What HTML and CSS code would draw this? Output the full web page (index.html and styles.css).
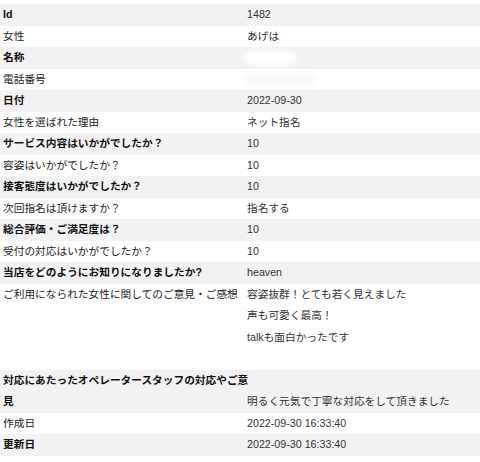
FILE: index.html
```html
<!DOCTYPE html>
<html lang="ja">
<head>
<meta charset="utf-8">
<link rel="stylesheet" href="styles.css">
</head>
<body>
<div class="list">
  <div class="row"><div class="k">Id</div><div class="v">1482</div></div>
  <div class="row"><div class="k">女性</div><div class="v">あげは</div></div>
  <div class="row"><div class="k">名称</div><div class="v"><span class="blur blur-w"></span></div></div>
  <div class="row"><div class="k">電話番号</div><div class="v"><span class="blur blur-g"></span></div></div>
  <div class="row"><div class="k">日付</div><div class="v">2022-09-30</div></div>
  <div class="row"><div class="k">女性を選ばれた理由</div><div class="v">ネット指名</div></div>
  <div class="row"><div class="k">サービス内容はいかがでしたか？</div><div class="v">10</div></div>
  <div class="row"><div class="k">容姿はいかがでしたか？</div><div class="v">10</div></div>
  <div class="row"><div class="k">接客態度はいかがでしたか？</div><div class="v">10</div></div>
  <div class="row"><div class="k">次回指名は頂けますか？</div><div class="v">指名する</div></div>
  <div class="row"><div class="k">総合評価・ご満足度は？</div><div class="v">10</div></div>
  <div class="row"><div class="k">受付の対応はいかがでしたか？</div><div class="v">10</div></div>
  <div class="row"><div class="k">当店をどのようにお知りになりましたか?</div><div class="v">heaven</div></div>
  <div class="row tall"><div class="k">ご利用になられた女性に関してのご意見・ご感想</div><div class="v">容姿抜群！とても若く見えました<br>声も可愛く最高！<br>talkも面白かったです</div></div>
  <div class="row"><div class="k">対応にあたったオペレータースタッフの対応やご意<br>見</div><div class="v end">明るく元気で丁寧な対応をして頂きました</div></div>
  <div class="row"><div class="k">作成日</div><div class="v">2022-09-30 16:33:40</div></div>
  <div class="row"><div class="k">更新日</div><div class="v">2022-09-30 16:33:40</div></div>
</div>
</body>
</html>
```

FILE: styles.css
```css
html, body {
  margin: 0;
  padding: 0;
  background: #fff;
}
body {
  padding-top: 4px;
  font-family: "Liberation Sans", "Noto Sans CJK JP", sans-serif;
  font-size: 10.7px;
  color: #333;
}
.list {
  display: flex;
  flex-direction: column;
}
.row {
  display: grid;
  grid-template-columns: 244px 1fr;
  line-height: 21.5px;
}
.row:nth-child(odd) {
  background: #f2f2f2;
}
.row:nth-child(odd) .k {
  font-weight: bold;
  color: #111;
}
.k {
  padding: 0 3px;
  color: #222;
  white-space: nowrap;
}
.v {
  padding: 0 3px;
  color: #333;
}
.tall {
  padding-bottom: 21.5px;
}
.end {
  align-self: end;
}
.blur {
  display: inline-block;
  vertical-align: middle;
  border-radius: 8px;
}
.blur-w {
  width: 52px;
  height: 14px;
  background: #fff;
  filter: blur(3px);
  margin-left: -3px;
}
.blur-g {
  width: 72px;
  height: 14px;
  background: #f7f7f7;
  filter: blur(3px);
  margin-left: -3px;
}
```
